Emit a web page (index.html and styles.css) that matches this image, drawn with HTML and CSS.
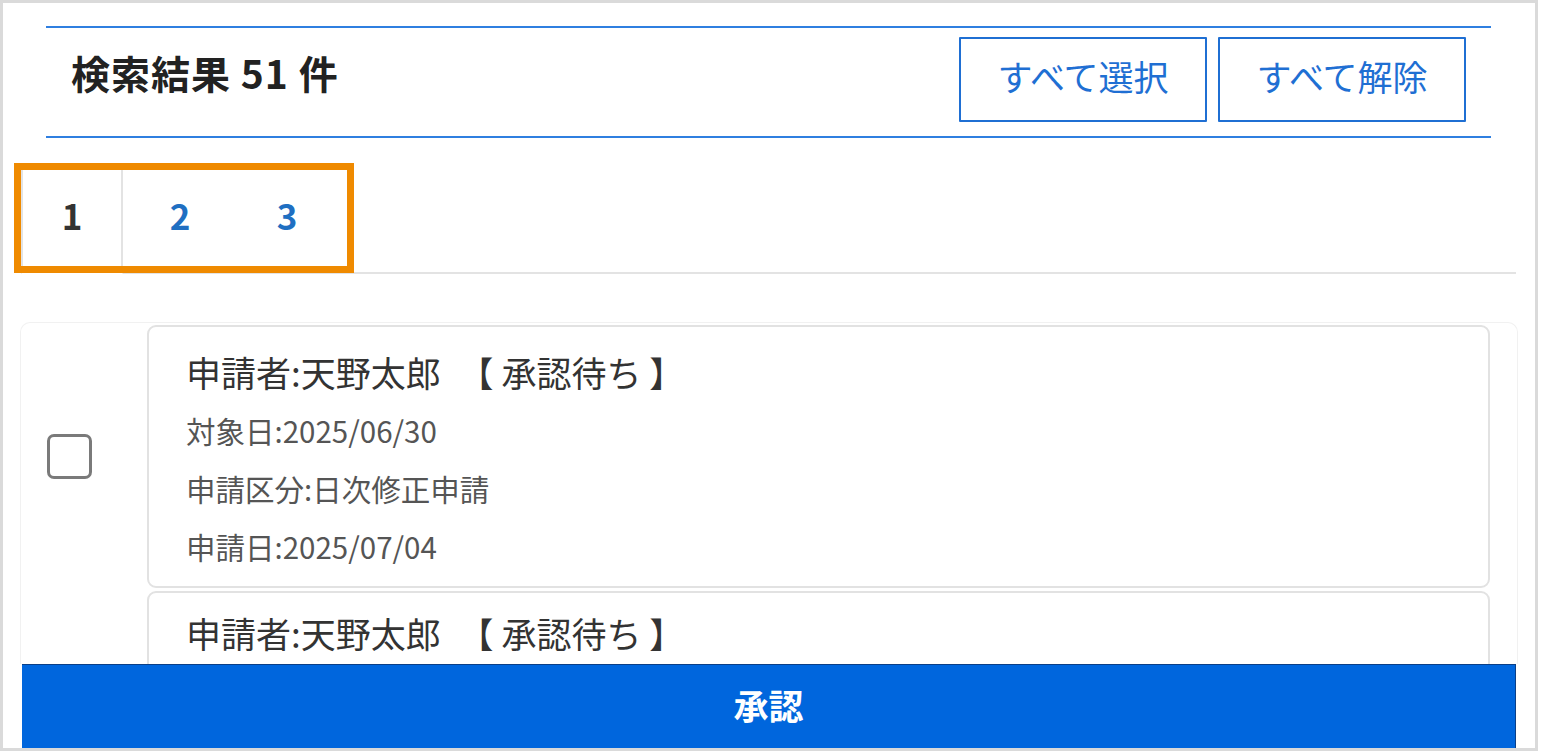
FILE: index.html
```html
<!DOCTYPE html>
<html lang="ja">
<head>
<meta charset="utf-8">
<title>検索結果</title>
<link rel="stylesheet" href="styles.css">
</head>
<body>
<div class="frame">
  <div class="result-head">
    <h1 class="result-title">検索結果 51 件</h1>
    <div class="head-actions">
      <button class="outline-btn">すべて選択</button>
      <button class="outline-btn">すべて解除</button>
    </div>
  </div>

  <div class="tabs-wrap">
    <div class="tabs">
      <span class="tab tab-active">1</span>
      <span class="tab tab-two">2</span>
      <span class="tab tab-three">3</span>
      <span class="tab-rest"></span>
    </div>
    <div class="highlight"></div>
  </div>

  <div class="list">
    <div class="row">
      <div class="check-col"><span class="checkbox"></span></div>
      <div class="card">
        <div class="card-head">申請者:天野太郎 <span class="status">【 承認待ち 】</span></div>
        <div class="card-line">対象日:2025/06/30</div>
        <div class="card-line">申請区分:日次修正申請</div>
        <div class="card-line">申請日:2025/07/04</div>
      </div>
    </div>
    <div class="row">
      <div class="check-col"><span class="checkbox"></span></div>
      <div class="card card-next">
        <div class="card-head">申請者:天野太郎 <span class="status">【 承認待ち 】</span></div>
      </div>
    </div>
  </div>

  <button class="approve-bar">承認</button>
</div>
</body>
</html>
```

FILE: styles.css
```css
* {
  box-sizing: border-box;
}

html, body {
  margin: 0;
  padding: 0;
  background: #ffffff;
}

body {
  font-family: "Noto Sans CJK JP", "Noto Sans", sans-serif;
  color: #333333;
}

.frame {
  width: 1538px;
  height: 751px;
  border: 3px solid #dadada;
  display: flex;
  flex-direction: column;
  overflow: hidden;
}

/* header */
.result-head {
  margin: 23px 44px 0 43px;
  height: 112px;
  border-top: 2px solid #2f7fe0;
  border-bottom: 2px solid #2f7fe0;
  padding: 9px 25px 0 25px;
  display: flex;
  justify-content: space-between;
  align-items: flex-start;
}

.result-title {
  margin: 0;
  height: 85px;
  display: flex;
  align-items: center;
  padding-bottom: 16px;
  font-size: 39px;
  font-weight: 700;
  color: #222222;
  letter-spacing: 1px;
}

.head-actions {
  display: flex;
  gap: 11px;
}

.outline-btn {
  width: 248px;
  height: 85px;
  border: 2px solid #1f6fd3;
  background: #ffffff;
  color: #1f6fd3;
  font-family: inherit;
  font-size: 35px;
  font-weight: 400;
  padding: 0 0 8px;
  border-radius: 1px;
}

/* tabs */
.tabs-wrap {
  position: relative;
  margin: 32px 19px 0 18px;
}

.tabs {
  display: flex;
  height: 104px;
}

.tab {
  display: flex;
  align-items: center;
  justify-content: center;
  padding-bottom: 14px;
  font-size: 35px;
  font-weight: 700;
  color: #1f6fc2;
  border-bottom: 2px solid #e3e3e3;
}

.tab-active {
  width: 102px;
  color: #333333;
  border-left: 2px solid #e3e3e3;
  border-right: 2px solid #e3e3e3;
  border-bottom-color: transparent;
}

.tab-two {
  width: 114px;
}

.tab-three {
  width: 100px;
}

.tab-rest {
  flex: 1;
  border-bottom: 2px solid #e3e3e3;
}

.highlight {
  position: absolute;
  left: -7px;
  top: -7px;
  width: 340px;
  height: 110px;
  border: 7px solid #ef8a00;
  pointer-events: none;
}

/* list */
.list {
  flex: 1;
  min-height: 0;
  overflow: hidden;
  margin: 48px 17px 0 17px;
  border: 1px solid #f1f1f1;
  border-bottom: none;
  border-radius: 10px 10px 0 0;
  padding: 2px 27px 0 0;
  display: flex;
  flex-direction: column;
  gap: 3px;
}

.row {
  display: flex;
  align-items: center;
  flex-shrink: 0;
}

.check-col {
  width: 126px;
  padding-left: 26px;
  display: flex;
  align-items: center;
}

.checkbox {
  width: 45px;
  height: 45px;
  border: 3px solid #7a7a7a;
  border-radius: 7px;
  background: #ffffff;
}

.card {
  flex: 1;
  height: 263px;
  border: 2px solid #e2e2e2;
  border-radius: 9px;
  padding: 16px 38px 0 37px;
}

.card-next {
  padding-top: 11px;
}

.card-head {
  height: 58px;
  line-height: 58px;
  font-size: 35px;
  color: #333333;
  white-space: nowrap;
}

.status {
  margin-left: 10px;
}

.card-line {
  height: 58px;
  line-height: 58px;
  font-size: 29.5px;
  color: #555555;
}

/* approve */
.approve-bar {
  flex-shrink: 0;
  margin: 0 19px 0 19px;
  height: 84px;
  border: none;
  border-top: 1px solid #0b3f86;
  border-right: 1px solid #0b3f86;
  background: #0066dd;
  color: #ffffff;
  font-family: inherit;
  font-size: 35px;
  font-weight: 700;
  padding: 0 0 4px;
}
```
